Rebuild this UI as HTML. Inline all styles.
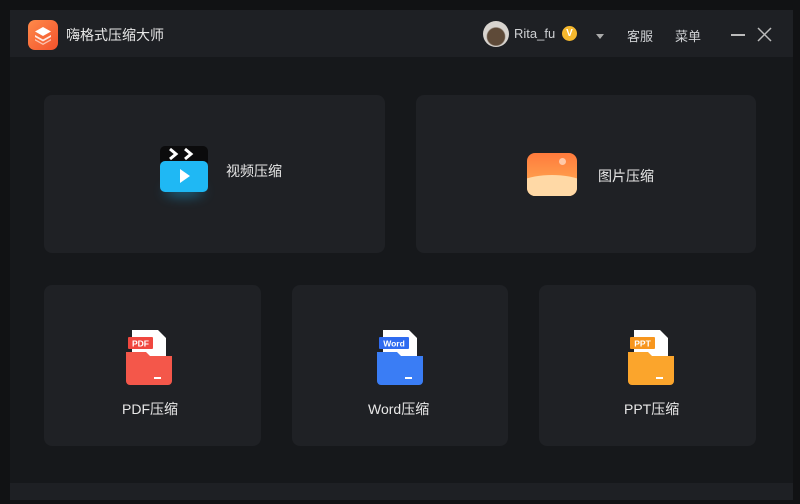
<!DOCTYPE html>
<html><head><meta charset="utf-8"><style>
*{margin:0;padding:0;box-sizing:border-box}
body{width:800px;height:504px;background:#111214;position:relative;overflow:hidden;font-family:"Liberation Sans","Noto Sans CJK SC",sans-serif;color:#e6e6e6}
.win{position:absolute;left:10px;top:10px;width:783px;height:490px;background:#16181b}
.tb{position:absolute;left:0;top:0;width:783px;height:47px;background:#1e2024}
.bot{position:absolute;left:0;bottom:0;width:783px;height:17px;background:#1e2024}
.card{position:absolute;background:#1f2125;border-radius:8px}
.t{position:absolute;font-size:14px;color:#e8e8e8;white-space:nowrap}
.s{position:absolute;font-size:13px;color:#cfd1d4}
</style></head><body>
<div class="win">
<div class="tb"></div>
<div class="bot"></div>
</div>
<div style="position:absolute;left:28px;top:20px;width:30px;height:30px;border-radius:7px;background:linear-gradient(135deg,#ff8a4a,#f2522c)"></div>
<svg style="position:absolute;left:28px;top:20px" width="30" height="30"><path d="M15 7 L23 11.5 L15 16 L7 11.5Z" fill="#fff"/><path d="M7 15 L15 19.5 L23 15 L23 17 L15 21.5 L7 17Z" fill="#fff" opacity=".85"/><path d="M7 19 L15 23.5 L23 19 L23 20.5 L15 25 L7 20.5Z" fill="#fff" opacity=".6"/></svg>
<div class="t" style="left:66px;top:25px;font-size:14px">嗨格式压缩大师</div>
<div style="position:absolute;left:483px;top:21px;width:26px;height:26px;border-radius:50%;background:radial-gradient(circle at 50% 60%,#5e4a38 0 42%,#d8d4cf 48%)"></div>
<div class="s" style="left:514px;top:26px">Rita_fu</div>
<div style="position:absolute;left:562px;top:26px;width:15px;height:15px;border-radius:50%;background:#f5b82e;color:#fff;font-size:10px;font-weight:bold;text-align:center;line-height:15px">V</div>
<div style="position:absolute;left:596px;top:34px;width:0;height:0;border-left:4px solid transparent;border-right:4px solid transparent;border-top:5px solid #aaa"></div>
<div class="s" style="left:627px;top:26px">客服</div>
<div class="s" style="left:675px;top:26px">菜单</div>
<div style="position:absolute;left:731px;top:34px;width:14px;height:1.5px;background:#bbb"></div>
<svg style="position:absolute;left:757px;top:27px" width="15" height="15"><path d="M1 1L14 14M14 1L1 14" stroke="#bbb" stroke-width="1.5"/></svg>
<div class="card" style="left:44px;top:95px;width:341px;height:158px"></div>
<div class="card" style="left:416px;top:95px;width:340px;height:158px"></div>
<div class="card" style="left:44px;top:285px;width:217px;height:161px"></div>
<div class="card" style="left:292px;top:285px;width:216px;height:161px"></div>
<div class="card" style="left:539px;top:285px;width:217px;height:161px"></div>
<div style="position:absolute;left:164px;top:186px;width:40px;height:10px;border-radius:50%;background:#19b6f5;filter:blur(6px);opacity:.5"></div>
<svg style="position:absolute;left:160px;top:146px" width="48" height="46"><rect x="0" y="0" width="48" height="20" rx="5" fill="#0b0b0c"/><path d="M10 3l6 5-6 5M25 3l6 5-6 5" stroke="#fff" stroke-width="3" fill="none"/><rect x="0" y="15" width="48" height="31" rx="5" fill="#1fb8f4"/><path d="M20 23v14l10-7z" fill="#fff"/></svg>
<div class="t" style="left:226px;top:161px">视频压缩</div>
<div style="position:absolute;left:527px;top:153px;width:50px;height:43px;border-radius:8px;overflow:hidden;background:linear-gradient(180deg,#ff7a3c,#ffb457)">
<div style="position:absolute;left:32px;top:5px;width:7px;height:7px;border-radius:50%;background:#ffc9a8"></div>
<div style="position:absolute;left:-20px;top:22px;width:90px;height:40px;border-radius:50%;background:#ffd9a6"></div>
</div>
<div class="t" style="left:598px;top:166px">图片压缩</div>
<svg style="position:absolute;left:126px;top:330px" width="46" height="55"><path d="M6 0h26l8 8v40H6z" fill="#fff"/><rect x="2" y="7" width="25" height="12" rx="1" fill="#f0473f"/><text x="14.5" y="16.5" font-size="8.5" font-weight="bold" fill="#fff" text-anchor="middle" font-family="Liberation Sans">PDF</text><path d="M0 22h20l4 4h22v25a4 4 0 0 1-4 4H4a4 4 0 0 1-4-4z" fill="#f4574a"/><rect x="28" y="47" width="7" height="2" fill="#fff"/></svg>
<div class="t" style="left:122px;top:399px">PDF压缩</div>
<svg style="position:absolute;left:377px;top:330px" width="46" height="55"><path d="M6 0h26l8 8v40H6z" fill="#fff"/><rect x="2" y="7" width="30" height="12" rx="1" fill="#2f6bf0"/><text x="17" y="16.5" font-size="8.5" font-weight="bold" fill="#fff" text-anchor="middle" font-family="Liberation Sans">Word</text><path d="M0 22h20l4 4h22v25a4 4 0 0 1-4 4H4a4 4 0 0 1-4-4z" fill="#3a7df5"/><rect x="28" y="47" width="7" height="2" fill="#fff"/></svg>
<div class="t" style="left:368px;top:399px">Word压缩</div>
<svg style="position:absolute;left:628px;top:330px" width="46" height="55"><path d="M6 0h26l8 8v40H6z" fill="#fff"/><rect x="2" y="7" width="25" height="12" rx="1" fill="#f7961e"/><text x="14.5" y="16.5" font-size="8.5" font-weight="bold" fill="#fff" text-anchor="middle" font-family="Liberation Sans">PPT</text><path d="M0 22h20l4 4h22v25a4 4 0 0 1-4 4H4a4 4 0 0 1-4-4z" fill="#fba52c"/><rect x="28" y="47" width="7" height="2" fill="#fff"/></svg>
<div class="t" style="left:624px;top:399px">PPT压缩</div>
</body></html>
